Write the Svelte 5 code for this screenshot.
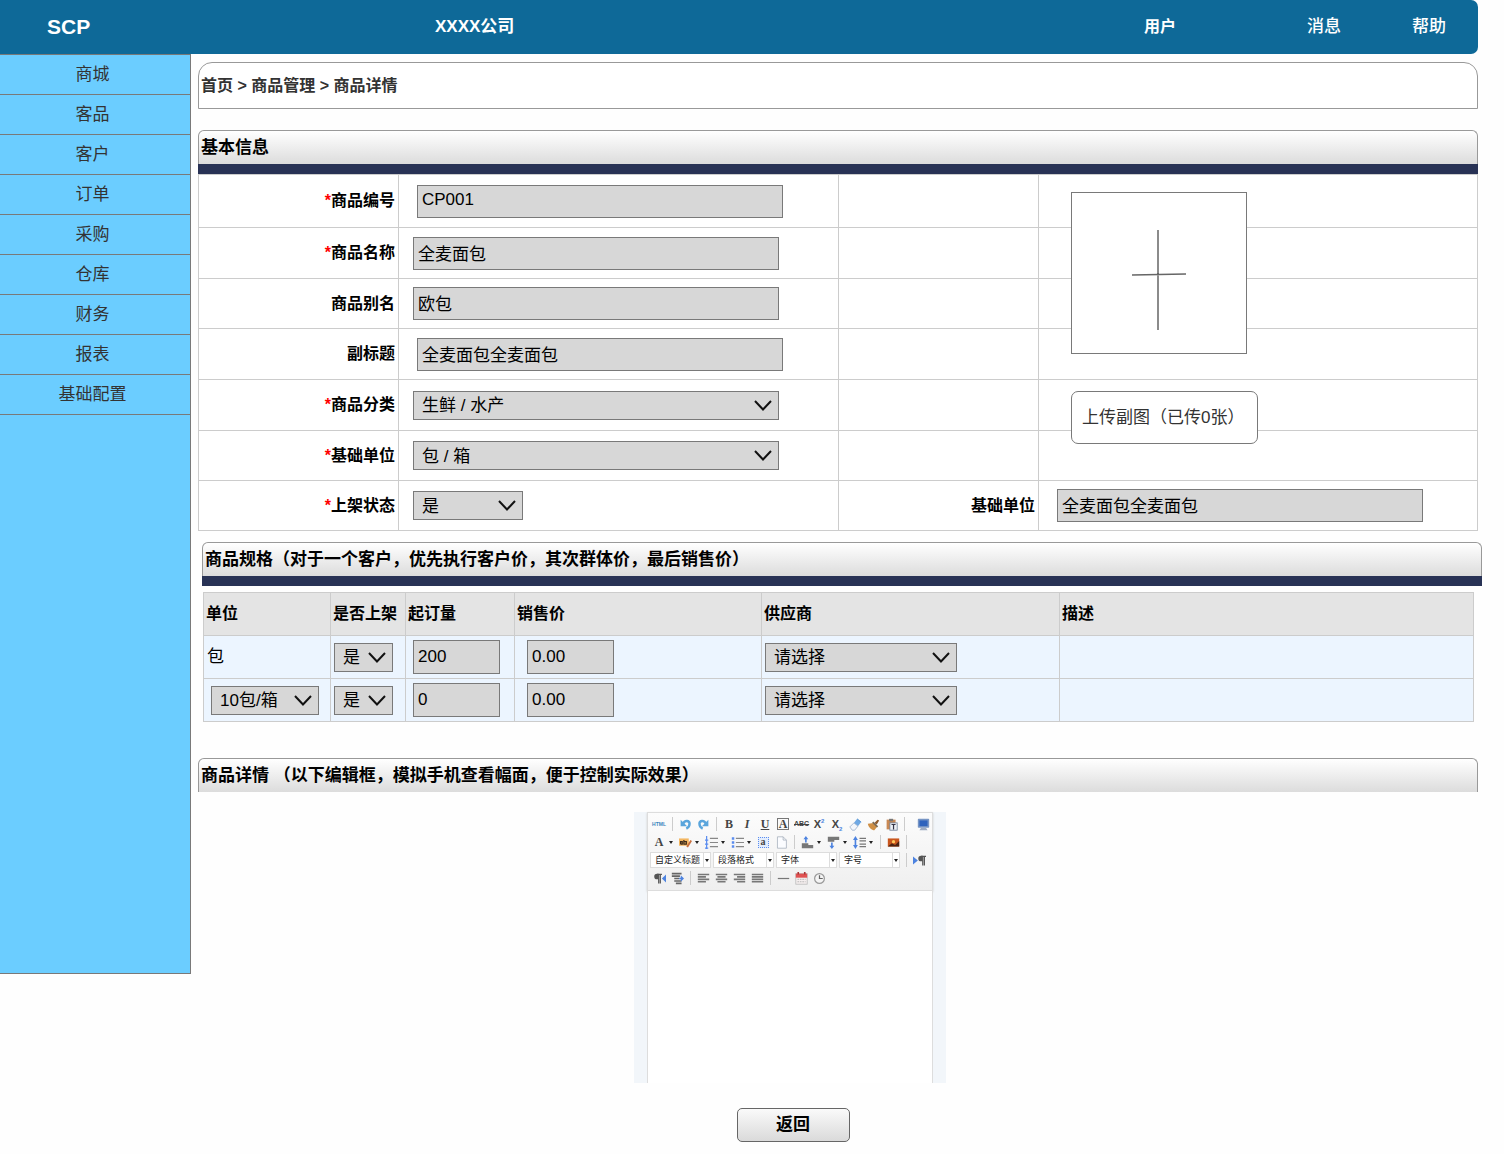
<script lang="ts">
	type Field = {
		id: string;
		label: string;
		required?: boolean;
		kind: 'text' | 'select';
		value: string;
		indent?: boolean;
		short?: boolean;
	};

	const menu = ['商城', '客品', '客户', '订单', '采购', '仓库', '财务', '报表', '基础配置'];

	let fields: Field[] = $state([
		{ id: 'code', label: '商品编号', required: true, kind: 'text', value: 'CP001', indent: true },
		{ id: 'name', label: '商品名称', required: true, kind: 'text', value: '全麦面包' },
		{ id: 'alias', label: '商品别名', kind: 'text', value: '欧包' },
		{ id: 'subtitle', label: '副标题', kind: 'text', value: '全麦面包全麦面包', indent: true },
		{ id: 'category', label: '商品分类', required: true, kind: 'select', value: '生鲜 / 水产' },
		{ id: 'unit', label: '基础单位', required: true, kind: 'select', value: '包 / 箱' },
		{ id: 'status', label: '上架状态', required: true, kind: 'select', value: '是', short: true }
	]);

	let baseUnit = $state('全麦面包全麦面包');

	let specs = $state([
		{ unit: '包', fixed: true, on: '是', min: '200', price: '0.00', supplier: '请选择' },
		{ unit: '10包/箱', fixed: false, on: '是', min: '0', price: '0.00', supplier: '请选择' }
	]);

	// '|' is a separator, a trailing '+' adds a drop-down arrow
	const rows = [
		['html', '|', 'undo', 'redo', '|', 'bold', 'italic', 'underline', 'border', 'strike', 'sup', 'sub', 'eraser', 'brush', 'paste', '|', ' ', 'screen'],
		['color+', 'marker+', 'ol+', 'ul+', 'anchor', 'page', '|', 'before+', 'after+', 'line+', '|', 'image', '|'],
		['=自定义标题', '=段落格式', '=字体', '=字号', '|', 'ltr'],
		['rtl', 'indent', '|', 'left', 'center', 'right', 'justify', '|', 'hr', 'date', 'time']
	];
</script>

{#snippet chevron()}
	<svg class="chevron" viewBox="0 0 18 11" aria-hidden="true">
		<path d="M1 1l8 8.500 8-8.500" fill="none" stroke="#111" stroke-width="2" />
	</svg>
{/snippet}

{#snippet dropdown(value: string, label: string, size: string, id?: string)}
	<div class="select {size}">
		<select {id} aria-label={label}>
			<option>{value}</option>
		</select>
		{@render chevron()}
	</div>
{/snippet}

{#snippet glyph(name: string)}
	{#if name === 'html'}
		<span class="g-html">HTML</span>
	{:else if name === 'bold'}
		<b>B</b>
	{:else if name === 'italic'}
		<b><i>I</i></b>
	{:else if name === 'underline'}
		<b><u>U</u></b>
	{:else if name === 'border'}
		<b class="g-box">A</b>
	{:else if name === 'strike'}
		<s class="g-strike">ABC</s>
	{:else if name === 'sup'}
		<span class="g-x">X<sup>2</sup></span>
	{:else if name === 'sub'}
		<span class="g-x">X<sub>2</sub></span>
	{:else if name === 'color'}
		<b>A</b>
	{:else if name === 'anchor'}
		<span class="g-anchor">a</span>
	{:else}
		<svg viewBox="0 0 16 16" aria-hidden="true">
			{#if name === 'undo'}
				<path d="M5 7c2-5 8-4 8 0 0 3-2 5-4 6" fill="none" stroke="#5aa5dc" stroke-width="3" />
				<path d="M2 2v8h8z" fill="#5aa5dc" />
			{:else if name === 'redo'}
				<path d="M11 7c-2-5-8-4-8 0 0 3 2 5 4 6" fill="none" stroke="#5aa5dc" stroke-width="3" />
				<path d="M14 2v8H6z" fill="#5aa5dc" />
			{:else if name === 'eraser'}
				<path d="M10 1l5 4-4 5-5-4z" fill="#6ea8e4" />
				<path d="M6 6l5 4-4 5H4l-3-4z" fill="#f3f6fb" stroke="#9ab0cc" />
				<path d="M10 1l5 4" stroke="#4f8ccc" />
			{:else if name === 'brush'}
				<path d="M9 6l4-4 2 1-3 5z" fill="#8f5a2c" />
				<path d="M1 7l7-1 5 4-4 5c-3 0-7-3-8-8z" fill="#cf8f45" />
				<path d="M7 5l6 6" stroke="#7a6a55" stroke-width="2" />
			{:else if name === 'paste'}
				<rect x="2" y="2" width="11" height="12" fill="#c98954" />
				<rect x="5" y="1" width="5" height="3" fill="#777" />
				<rect x="6" y="6" width="9" height="9" fill="#eef2f8" stroke="#6f7f96" />
				<path d="M8 8h5M10.500 8v6" stroke="#334" stroke-width="1.500" />
			{:else if name === 'screen'}
				<rect x="1" y="1" width="14" height="11" rx="1" fill="#7795c4" />
				<rect x="3" y="3" width="10" height="7" fill="#2d62bd" />
				<path d="M5 12h6l2 3H3z" fill="#9dabc2" />
			{:else if name === 'marker'}
				<rect x="0" y="3" width="12" height="9" fill="#f3b661" />
				<path d="M2 10V7h2v3H2M6 5v5h3V7H6" fill="none" stroke="#3c2b1c" stroke-width="1.500" />
				<path d="M9 13l5-8 2 1-5 8z" fill="#c9703e" />
			{:else if name === 'ol' || name === 'ul'}
				<path d="M6 3h10M6 8h10M6 13h10" stroke="#888" stroke-width="1.500" />
				{#if name === 'ol'}
					<path d="M2 0v16M0 5h4M0 10h4M0 15h4" stroke="#5b8def" stroke-width="1.500" />
				{:else}
					<path d="M1 3h3M1 8h3M1 13h3" stroke="#5b8def" stroke-width="3" />
				{/if}
			{:else if name === 'page'}
				<path d="M3 1h7l4 4v10H3z" fill="#fbfcff" stroke="#a9b1be" />
				<path d="M10 1v4h4" fill="none" stroke="#a9b1be" />
			{:else if name === 'before'}
				<path d="M1 9h8v2h6v4H1z" fill="#777" />
				<path d="M6 0l3 4H7v4H5V4H3z" fill="#4d83e0" />
			{:else if name === 'after'}
				<path d="M1 1h14v4H9v2H1z" fill="#777" />
				<path d="M6 16l3-4H7V8H5v4H3z" fill="#4d83e0" />
			{:else if name === 'line'}
				<path d="M3 0l3 5H4v6h2l-3 5-3-5h2V5H0z" fill="#4d83e0" />
				<path d="M8 3h8M8 6h8M8 10h8M8 13h8" stroke="#777" stroke-width="1.500" />
			{:else if name === 'image'}
				<rect x="1" y="3" width="14" height="10" fill="#c9561d" />
				<path d="M1 13l5-4 4 2 5-5v7z" fill="#4b2312" />
				<circle cx="8" cy="7" r="2" fill="#ffc75b" />
			{:else if name === 'ltr' || name === 'rtl'}
				<g transform={name === 'rtl' ? 'translate(-5 0)' : undefined}>
					<path d="M16 3h-6M14 3v11M12 3v11" fill="none" stroke="#555" stroke-width="1.500" />
					<path d="M10 2a3 3 0 000 7h2V2z" fill="#555" />
				</g>
				{#if name === 'ltr'}
					<path d="M0 3l6 5-6 5z" fill="#4d83e0" />
				{:else}
					<path d="M16 3l-5 5 5 5z" fill="#4d83e0" />
				{/if}
			{:else if name === 'indent'}
				<path d="M1 2h12M1 5h10M4 8h6M4 11h9M6 14h7" stroke="#666" stroke-width="2" />
				<path d="M10 7h2V4l4 4-4 4V9h-2z" fill="#4d83e0" />
			{:else if name === 'left'}
				<path d="M1 3h14M1 6h10M1 9h14M1 12h10" stroke="#777" stroke-width="2" />
			{:else if name === 'center'}
				<path d="M1 3h14M3 6h10M1 9h14M3 12h10" stroke="#777" stroke-width="2" />
			{:else if name === 'right'}
				<path d="M1 3h14M5 6h10M1 9h14M5 12h10" stroke="#777" stroke-width="2" />
			{:else if name === 'justify'}
				<path d="M1 3h14M1 6h14M1 9h14M1 12h14" stroke="#777" stroke-width="2" />
			{:else if name === 'hr'}
				<path d="M1 8h14" stroke="#777" stroke-width="1.500" />
			{:else if name === 'date'}
				<rect x="1" y="2" width="14" height="13" fill="#f5efef" stroke="#bbb" />
				<rect x="1" y="2" width="14" height="5" fill="#e05252" />
				<path d="M4 0v3M12 0v3" stroke="#a33" stroke-width="2" />
				<path d="M3 9h10M3 12h10" stroke="#aaa" stroke-dasharray="2 1" />
			{:else if name === 'time'}
				<circle cx="8" cy="8" r="6" fill="#f4f4f4" stroke="#999" stroke-width="1.500" />
				<path d="M8 4v4h4" fill="none" stroke="#666" stroke-width="1.500" />
			{/if}
		</svg>
	{/if}
{/snippet}

<header class="topbar">
	<span class="brand">SCP</span>
	<span class="company">XXXX公司</span>
	<a class="user" href="#user">用户</a>
	<a class="message" href="#message">消息</a>
	<a href="#help">帮助</a>
</header>

<div class="layout">
	<nav class="sidebar">
		{#each menu as item}
			<a href="#{item}">{item}</a>
		{/each}
	</nav>

	<main>
		<div class="crumbs">首页 &gt; 商品管理 &gt; 商品详情</div>

		<section>
			<h2 class="bar ruled">基本信息</h2>
			<div class="form">
				{#each fields as field, i (field.id)}
					<div class="form-row">
						<label for={field.id}>
							{#if field.required}<em>*</em>{/if}{field.label}
						</label>
						<div class="cell" class:indent={field.indent}>
							{#if field.kind === 'text'}
								<input id={field.id} type="text" bind:value={field.value} />
							{:else}
								{@render dropdown(field.value, field.label, field.short ? 'short' : 'long', field.id)}
							{/if}
						</div>
						{#if i === fields.length - 1}
							<label for="base-unit">基础单位</label>
							<div class="cell indent">
								<input id="base-unit" type="text" bind:value={baseUnit} />
							</div>
						{:else}
							<div class="cell"></div>
							<div class="cell"></div>
						{/if}
					</div>
				{/each}
				<div class="upload">
					<button class="picture" aria-label="上传主图">
						<svg viewBox="0 0 54 100" aria-hidden="true">
							<path d="M26 0v100M0 45l54-1" stroke="#666" stroke-width="1.500" />
						</svg>
					</button>
					<button class="more">上传副图（已传0张）</button>
				</div>
			</div>
		</section>

		<section class="specs">
			<h2 class="bar ruled">商品规格（对于一个客户，优先执行客户价，其次群体价，最后销售价）</h2>
			<table>
				<colgroup>
					<col class="c-unit" /><col class="c-on" /><col class="c-min" />
					<col class="c-price" /><col class="c-supplier" /><col />
				</colgroup>
				<thead>
					<tr>
						<th>单位</th>
						<th>是否上架</th>
						<th>起订量</th>
						<th>销售价</th>
						<th>供应商</th>
						<th>描述</th>
					</tr>
				</thead>
				<tbody>
					{#each specs as spec}
						<tr>
							{#if spec.fixed}
								<td>{spec.unit}</td>
							{:else}
								<td class="pad">{@render dropdown(spec.unit, '单位', 'unit')}</td>
							{/if}
							<td>{@render dropdown(spec.on, '是否上架', 'tiny')}</td>
							<td class="pad"><input type="text" aria-label="起订量" bind:value={spec.min} /></td>
							<td class="pad-wide"><input type="text" aria-label="销售价" bind:value={spec.price} /></td>
							<td>{@render dropdown(spec.supplier, '供应商', 'medium')}</td>
							<td></td>
						</tr>
					{/each}
				</tbody>
			</table>
		</section>

		<section class="detail">
			<h2 class="bar">商品详情 （以下编辑框，模拟手机查看幅面，便于控制实际效果）</h2>
			<div class="phone">
				<div class="editor">
					<div class="toolbar">
						{#each rows as row}
							<div class="tools">
								{#each row as tool}
									{#if tool === '|'}
										<span class="sep"></span>
									{:else if tool === ' '}
										<span class="space"></span>
									{:else if tool.startsWith('=')}
										<div class="pick">
											<select aria-label={tool.slice(1)}><option>{tool.slice(1)}</option></select>
											<span class="drop"><i class="arrow"></i></span>
										</div>
									{:else}
										<button class="tool" class:has-arrow={tool.endsWith('+')} aria-label={tool.replace('+', '')}>
											<span class="glyph">{@render glyph(tool.replace('+', ''))}</span>
											{#if tool.endsWith('+')}<i class="arrow"></i>{/if}
										</button>
									{/if}
								{/each}
							</div>
						{/each}
					</div>
					<textarea aria-label="商品详情"></textarea>
				</div>
			</div>
		</section>

		<div class="actions">
			<button class="back">返回</button>
		</div>
	</main>
</div>

<style>
	:global(body) {
		background: #fefefe;
		font-family: 'Liberation Sans', 'Noto Sans CJK SC', sans-serif;
		font-size: 17px;
		line-height: 24px;
		color: #000;
	}
	* {
		box-sizing: border-box;
	}
	button,
	input,
	select,
	textarea {
		font: inherit;
		color: inherit;
		margin: 0;
		border-radius: 0;
	}
	a {
		color: inherit;
		text-decoration: none;
	}

	.topbar {
		display: flex;
		align-items: center;
		height: 54px;
		margin-right: 26px;
		padding: 0 32px 0 47px;
		border-radius: 0 7px 7px 0;
		background: #0e6998;
		color: #fff;
		font-weight: 500;
	}
	.brand {
		width: 388px;
		font-size: 21px;
		font-weight: 700;
	}
	.company {
		flex: 1;
		font-weight: 700;
	}
	.user {
		margin-right: 131px;
		font-size: 16px;
		font-weight: 700;
	}
	.message {
		margin-right: 71px;
	}

	.layout {
		display: flex;
		align-items: flex-start;
	}
	.sidebar {
		flex: 0 0 191px;
		min-height: calc(100vh - 234px);
		border: 1px solid #797979;
		border-left: 0;
		background: #6bcdff;
		color: #333;
	}
	.sidebar a {
		display: block;
		height: 40px;
		padding-right: 5px;
		border-bottom: 1px solid #797979;
		line-height: 40px;
		text-align: center;
	}

	main {
		flex: 1;
		min-width: 0;
		padding: 8px 26px 12px 7px;
	}
	.crumbs {
		height: 47px;
		margin-bottom: 21px;
		padding: 0 2px;
		border: 1px solid #999;
		border-radius: 14px 14px 0 0;
		background: #fff;
		color: #333;
		font-size: 16px;
		font-weight: 700;
		line-height: 46px;
	}

	.bar {
		margin: 0;
		padding: 0 2px;
		border: 1px solid #999;
		border-bottom: 0;
		border-radius: 6px 6px 0 0;
		background: linear-gradient(#fff, #dcdcdc);
		font-size: 17px;
		font-weight: 700;
		line-height: 33px;
	}
	.ruled {
		margin-bottom: 10px;
		box-shadow: 0 10px 0 #283255;
	}

	.form {
		position: relative;
		border: 1px solid #ccc;
		border-top: 0;
		background: #fff;
	}
	.form-row {
		display: grid;
		grid-template-columns: 199px 440px 200px 1fr;
		height: 51px;
		border-top: 1px solid #ccc;
	}
	.form-row:first-child {
		height: 53px;
	}
	.form-row:nth-child(3n),
	.form-row:nth-child(7) {
		height: 50px;
	}
	.form-row > * {
		display: flex;
		align-items: center;
	}
	.form-row > * + * {
		border-left: 1px solid #ccc;
	}
	.form-row label {
		justify-content: flex-end;
		padding-right: 3px;
		font-size: 16px;
		font-weight: 700;
	}
	em {
		color: #f00;
		font-style: normal;
	}
	.cell {
		padding-left: 14px;
	}
	.cell.indent {
		padding-left: 18px;
	}
	input {
		width: 366px;
		height: 33px;
		padding: 0 4px;
		border: 1px solid #797979;
		background: #d7d7d7;
	}
	.cell input {
		padding-bottom: 2px;
	}

	.select {
		position: relative;
		height: 29px;
	}
	.select select {
		display: block;
		width: 100%;
		height: 100%;
		padding: 2px 8px 0;
		border: 1px solid #797979;
		background: #d7d7d7;
		appearance: none;
	}
	.chevron {
		position: absolute;
		top: 9px;
		right: 7px;
		width: 18px;
		height: 11px;
		pointer-events: none;
	}
	.long {
		width: 366px;
	}
	.medium {
		width: 192px;
	}
	.short {
		width: 110px;
	}
	.unit {
		width: 108px;
	}
	.tiny {
		width: 59px;
	}

	/* the picture box lies over the empty right-hand cells */
	.upload {
		position: absolute;
		top: 18px;
		left: 872px;
		display: flex;
		flex-direction: column;
		align-items: flex-start;
		gap: 37px;
	}
	.picture {
		display: grid;
		place-items: center;
		width: 176px;
		height: 162px;
		padding: 14px 0 0;
		border: 1px solid #797979;
		background: #fff;
	}
	.picture svg {
		width: 54px;
		height: 100px;
	}
	.more {
		width: 187px;
		height: 53px;
		padding: 0 10px;
		border: 1px solid #797979;
		border-radius: 7px;
		background: #fff;
		color: #333;
		text-align: left;
		white-space: nowrap;
	}

	.specs {
		margin: 11px -4px 0 4px;
	}
	.specs .bar {
		margin-bottom: 16px;
	}
	table {
		width: calc(100% - 9px);
		margin-left: 1px;
		border-collapse: collapse;
		table-layout: fixed;
	}
	.c-unit {
		width: 127px;
	}
	.c-on {
		width: 75px;
	}
	.c-min {
		width: 109px;
	}
	.c-price {
		width: 247px;
	}
	.c-supplier {
		width: 298px;
	}
	th,
	td {
		height: 43px;
		padding: 0 3px;
		border: 1px solid #ccc;
		text-align: left;
		white-space: nowrap;
	}
	th {
		padding: 0 2px;
		background: #e4e4e4;
		font-size: 16px;
	}
	td {
		background: #ecf5ff;
	}
	td.pad {
		padding-left: 7px;
	}
	td.pad-wide {
		padding-left: 12px;
	}
	td input {
		display: block;
		width: 87px;
		height: 34px;
	}

	.detail {
		margin-top: 36px;
	}
	.phone {
		display: flex;
		justify-content: center;
		margin-top: 20px;
		padding-right: 96px;
	}
	.editor {
		width: 312px;
		padding: 0 13px;
		background: #f2f6fa;
	}
	.toolbar {
		height: 79px;
		padding: 2px 0 0 2px;
		border: 1px solid #ddd;
		background: linear-gradient(#fcfcfc, #efefef);
		box-shadow: 0 1px 2px #ccc;
		font-family: 'Liberation Serif', 'Noto Sans CJK SC', serif;
		font-size: 12px;
		line-height: 16px;
		color: #444;
	}
	.tools {
		display: flex;
		align-items: center;
		height: 18px;
	}
	.tool {
		display: flex;
		align-items: center;
		width: 18px;
		height: 18px;
		padding: 0 2px;
		border: 0;
		background: none;
	}
	.tool.has-arrow {
		width: 26px;
	}
	.glyph {
		flex: 0 0 14px;
		display: flex;
		align-items: center;
		justify-content: center;
	}
	.glyph svg {
		width: 13px;
		height: 13px;
	}
	.g-html {
		color: #3a86bd;
		font: 700 5px/16px 'Liberation Sans', sans-serif;
	}
	.g-box {
		width: 12px;
		height: 12px;
		border: 1px solid #777;
		line-height: 11px;
	}
	.g-strike {
		font: 700 7px/16px 'Liberation Sans', sans-serif;
	}
	.g-x {
		font: 700 11px/12px 'Liberation Sans', sans-serif;
	}
	.g-x sup,
	.g-x sub {
		color: #4d83e0;
		font-size: 6px;
		line-height: 0;
	}
	.g-anchor {
		width: 11px;
		height: 11px;
		border: 1px dotted #5b8def;
		background: #e3edfd;
		font-size: 10px;
		font-weight: 700;
		line-height: 8px;
	}
	.arrow {
		border: 2px solid transparent;
		border-top: 3px solid #222;
		border-bottom: 0;
	}
	.has-arrow .arrow {
		margin-left: 3px;
	}
	.sep {
		width: 8px;
		height: 14px;
		background: linear-gradient(#ccc, #ccc) center / 1px 100% no-repeat;
	}
	.space {
		width: 6px;
	}
	.pick {
		position: relative;
		width: 61px;
		height: 16px;
		margin-right: 2px;
	}
	.pick select {
		display: block;
		width: 100%;
		height: 100%;
		padding: 0 4px;
		border: 1px solid #ddd;
		background: #fff;
		color: #222;
		font-size: 9px;
		line-height: 14px;
		appearance: none;
	}
	.drop {
		position: absolute;
		inset: 1px 1px 1px auto;
		display: grid;
		place-items: center;
		width: 7px;
		border-left: 1px solid #ddd;
		pointer-events: none;
	}
	textarea {
		display: block;
		width: 100%;
		height: 192px;
		border: 1px solid #ddd;
		border-width: 0 1px;
		background: #fff;
		resize: none;
	}

	.actions {
		display: flex;
		justify-content: center;
		margin-top: 25px;
		padding-right: 90px;
	}
	.back {
		width: 113px;
		height: 34px;
		padding: 0;
		border: 1px solid #666;
		border-radius: 5px;
		background: linear-gradient(#fafafa, #dadada);
		font-weight: 700;
	}
</style>
